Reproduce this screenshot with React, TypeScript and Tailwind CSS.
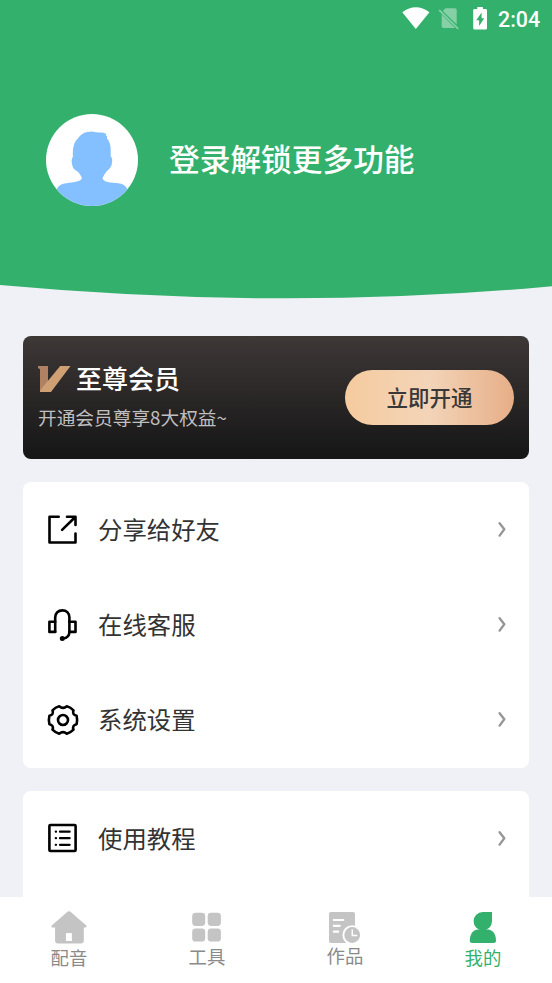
import type { ReactNode } from 'react'

interface MenuItem {
  label: string
  icon: ReactNode
}

interface Tab {
  label: string
  icon: ReactNode
  labelClass: string
}

const mainMenu: MenuItem[] = [
  { label: '分享给好友', icon: <ShareIcon /> },
  { label: '在线客服', icon: <HeadsetIcon /> },
  { label: '系统设置', icon: <GearIcon /> },
]

const helpMenu: MenuItem[] = [{ label: '使用教程', icon: <GuideIcon /> }]

const tabs: Tab[] = [
  { label: '配音', icon: <HomeIcon />, labelClass: 'mt-[3px] text-[#8a8a8a]' },
  { label: '工具', icon: <ToolsIcon />, labelClass: 'mt-[2px] text-[#8a8a8a]' },
  { label: '作品', icon: <WorksIcon />, labelClass: 'mt-px text-[#8a8a8a]' },
  { label: '我的', icon: <MineIcon />, labelClass: 'mt-[3px] text-[#33b16c]' },
]

export default function App() {
  return (
    <div className="flex h-[983px] w-[552px] flex-col overflow-hidden bg-[#f0f1f7] font-['Noto_Sans_CJK_SC',sans-serif]">
      {/* Header */}
      <header className="h-[285px] shrink-0 bg-[#33b16c]">
        <StatusBar />
        <div className="flex items-center gap-[31px] pt-[76px] pl-[46px]">
          <Avatar />
          <h1 className="pb-[3px] text-[30.7px] leading-none font-medium text-white">登录解锁更多功能</h1>
        </div>
      </header>
      <svg className="block h-[14px] w-full shrink-0" viewBox="0 0 552 14" fill="#33b16c">
        <path d="M0 0H552V1.3Q285 26 0 0Z" />
      </svg>

      <main className="flex min-h-0 flex-1 flex-col gap-[23px] overflow-hidden px-[23px] pt-[37px]">
        {/* VIP card */}
        <section className="flex h-[123px] shrink-0 items-center justify-between rounded-lg bg-linear-to-b from-[#3e3837] to-[#161616] px-[15px]">
          <div className="flex flex-col gap-[13px] pb-[5px]">
            <div className="flex h-[30px] items-center gap-[5px]">
              <VipLogo />
              <span className="pb-[2px] text-[26px] leading-[30px] font-medium text-white">至尊会员</span>
            </div>
            <p className="text-[18.7px] leading-5 text-[#c0bfbf]">开通会员尊享8大权益~</p>
          </div>
          <button className="h-[55px] w-[169px] rounded-full bg-linear-to-r from-[#f5cb9f] via-[#f3d4b8] to-[#e6ae87] pb-[2px] text-[21.5px] leading-none font-medium text-[#383838]">
            立即开通
          </button>
        </section>

        <section className="h-[286px] shrink-0 rounded-lg bg-white">
          {mainMenu.map((item) => (
            <MenuRow key={item.label} item={item} />
          ))}
        </section>

        <section className="h-[190px] shrink-0 rounded-lg bg-white">
          {helpMenu.map((item) => (
            <MenuRow key={item.label} item={item} />
          ))}
        </section>
      </main>

      {/* Tab bar */}
      <nav className="grid h-[86px] shrink-0 grid-cols-4 bg-white pt-[14px]">
        {tabs.map((tab) => (
          <div key={tab.label} className="flex flex-col items-center">
            {tab.icon}
            <span className={`text-[18.4px] leading-5 ${tab.labelClass}`}>{tab.label}</span>
          </div>
        ))}
      </nav>
    </div>
  )
}

function StatusBar() {
  return (
    <div className="flex h-[38px] items-center justify-end pr-[13px]">
      <svg className="h-[38px] w-[96px]" viewBox="401 0 96 38" fill="#fff">
        <path d="M401.3 12.3Q414.8 2.2 428.4 12.3L414.8 29Z" />
        <g opacity=".4">
          <path d="M444.5 8.3H454Q455.7 8.3 455.7 10V24.5L441.8 10.9Z" />
          <path d="M440.7 14.5L454 28H442.4Q440.7 28 440.7 26.3Z" />
          <path d="M438.2 10.2L457.2 28.8" stroke="#fff" strokeWidth="1.8" />
        </g>
        <path
          fillRule="evenodd"
          d="M476.3 6.9H481.9V9H484.6Q486 9 486 10.4V28.2Q486 29.6 484.6 29.6H473.6Q472.2 29.6 472.2 28.2V10.4Q472.2 9 473.6 9H476.3ZM480.6 12.6L475.2 20.3H478.1V26L483.2 18.3H480.6Z"
        />
      </svg>
      <span className="w-[41px] pt-px font-[Roboto,sans-serif] text-[21.4px] leading-[38px] font-medium text-white">
        2:04
      </span>
    </div>
  )
}

function Avatar() {
  return (
    <div className="size-[92px] overflow-hidden rounded-full bg-white">
      <svg className="size-[92px]" viewBox="0 0 92 92">
        <path
          fill="#84bfff"
          d="M44 17.7C47 17.3 49 18.6 52 18.6C55 18.4 58 18.6 60.3 20.2L59.8 21.5L61.4 22.4L60.7 24C63.8 27.5 64.7 31 64.7 36V42.5C66.5 43.7 66.5 46.5 65.8 50C65 54 62.5 55.5 60.5 57.5C58.8 59.8 57.5 61.8 56.5 64C56.8 66.5 60 67.8 64 68.4C68.5 68.9 71 68.7 75 69.8C78.5 71 81 73 81.5 77V92H10.5V77C11 73 13.8 71 17.3 69.8C21.5 68.7 24.5 68.8 28.5 68C32 67.4 35.5 66.3 35.9 64.3C35 61.5 33.5 59.5 31.7 57.5C28.5 56 26.8 54.3 26.2 51C25.5 47.5 25.3 45 26.9 42.7C26.8 39 26.6 34.5 28 31C28.6 28.5 29.6 26.8 31.5 25C34.5 20.5 38.5 17.7 44 17.7Z"
        />
      </svg>
    </div>
  )
}

function VipLogo() {
  return (
    <svg className="h-[26px] w-[33px]" viewBox="0 0 33 26">
      <path fill="#b08263" d="M0 0H10V16L2 26V3.2L0 2Z" />
      <path fill="#d0a075" d="M22.2 0H32.5L13 26H2V24.5Z" />
    </svg>
  )
}

function MenuRow({ item }: { item: MenuItem }) {
  return (
    <div className="flex h-[95px] items-center pr-[23px] pl-[23px]">
      {item.icon}
      <span className="ml-[19px] flex-1 text-[24.4px] leading-none text-[#333]">{item.label}</span>
      <svg
        className="h-[17px] w-[8px]"
        viewBox="0 0 8 17"
        fill="none"
        stroke="#959595"
        strokeWidth="2.3"
        strokeLinecap="round"
        strokeLinejoin="round"
      >
        <path d="M1.6 2.2L6.3 8.3L1.6 14.6" />
      </svg>
    </div>
  )
}

function LineIcon({ children }: { children: ReactNode }) {
  return (
    <svg
      className="h-[31px] w-[33px] overflow-visible"
      viewBox="0 0 33 31"
      fill="none"
      stroke="#000"
      strokeWidth="2.6"
      strokeLinecap="round"
      strokeLinejoin="round"
    >
      {children}
    </svg>
  )
}

function ShareIcon() {
  return (
    <LineIcon>
      <path d="M12.7 2.8H3.5V28.5H29.5V19.6" />
      <path d="M21 2.8H29.5V11M29 3.3L16.1 15.9" />
    </LineIcon>
  )
}

function HeadsetIcon() {
  return (
    <LineIcon>
      <path d="M9.2 22.8V8.6C9.2 4 12.3 1.4 16.3 1.4S23.4 4 23.4 8.6V22.8C23.4 27 20.8 29.2 17 29.5" />
      <path d="M9.2 12.8H3.4V22.9H9.2M23.4 12.8H29.5V22.9H23.4" />
      <circle cx="16.3" cy="29.6" r="1.2" fill="#000" />
    </LineIcon>
  )
}

function GearIcon() {
  return (
    <LineIcon>
      <g transform="translate(17 16)">
        <path d="M13.6 -4.3Q14.7 0 13.6 4.3Q8.9 5.4 10.5 9.7Q7.6 12.7 3.8 13.7Q0 10.6 -3.8 13.7Q-7.6 12.7 -10.5 9.7Q-8.9 5.4 -13.6 4.3Q-14.7 0 -13.6 -4.3Q-8.9 -5.4 -10.5 -9.7Q-7.6 -12.7 -3.8 -13.7Q0 -10.6 3.8 -13.7Q7.6 -12.7 10.5 -9.7Q8.9 -5.4 13.6 -4.3Z" />
        <circle r="5" />
      </g>
    </LineIcon>
  )
}

function GuideIcon() {
  return (
    <LineIcon>
      <rect x="3.4" y="2" width="26.2" height="26" rx="1" />
      <path strokeWidth="2.3" d="M14 8.7H23.6M14 15.2H23.6M14 21.8H23.6M9.8 8.7H10M9.8 15.2H10M9.8 21.8H10" />
    </LineIcon>
  )
}

function HomeIcon() {
  return (
    <svg className="h-[33px] w-[36px]" viewBox="0 0 36 33" fill="#c4c4c4">
      <path
        fillRule="evenodd"
        d="M16.8 .6Q18 -.2 19.2 .6L35.3 14.6Q36.2 16 34.6 16.5H32.8V29.5Q32.8 32.4 29.9 32.4H7Q4.1 32.4 4.1 29.5V16.5H1.2Q-.2 16 .7 14.6ZM15.9 21.9Q14.9 21.9 14.9 22.9V30H20.9V22.9Q20.9 21.9 19.9 21.9Z"
      />
    </svg>
  )
}

function ToolsIcon() {
  return (
    <svg className="h-[33px] w-[36px]" viewBox="0 0 36 33" fill="#c4c4c4">
      <rect x="3.2" y="1.8" width="13" height="13.2" rx="3.4" />
      <rect x="18.7" y="1.8" width="13.2" height="13.2" rx="3.4" />
      <rect x="3.2" y="17.4" width="13" height="13.2" rx="3.4" />
      <rect x="18.7" y="17.4" width="13.2" height="13.2" rx="3.4" />
    </svg>
  )
}

function WorksIcon() {
  return (
    <svg className="h-[33px] w-[36px]" viewBox="0 0 36 33" fill="#c4c4c4">
      <rect x="2" y="1" width="26" height="31" rx="2" />
      <path
        d="M6.8 9H16.2M6.8 14.8H12.8M6.8 20.7H11.2"
        stroke="#fff"
        strokeWidth="2.2"
        strokeLinecap="round"
      />
      <circle cx="25.2" cy="24" r="9.8" fill="#fff" />
      <circle cx="25.2" cy="24" r="7.9" />
      <path d="M25.3 18.5V24.6H30.3" fill="none" stroke="#fff" strokeWidth="1.5" />
    </svg>
  )
}

function MineIcon() {
  return (
    <svg className="h-[33px] w-[36px]" viewBox="0 0 36 33" fill="#33b16c">
      <path d="M17.6 1H27V10.2A9.2 9.2 0 0 1 17.8 19.4A9.2 9.2 0 0 1 8.6 10.2A9.2 9.2 0 0 1 17.6 1Z" />
      <path d="M4.8 29.5C4.8 23.5 7.6 19.2 12.2 18.4H23.6C28.2 19.2 31 23.5 31 29.5Q31 32 28.5 32H7.3Q4.8 32 4.8 29.5Z" />
    </svg>
  )
}
